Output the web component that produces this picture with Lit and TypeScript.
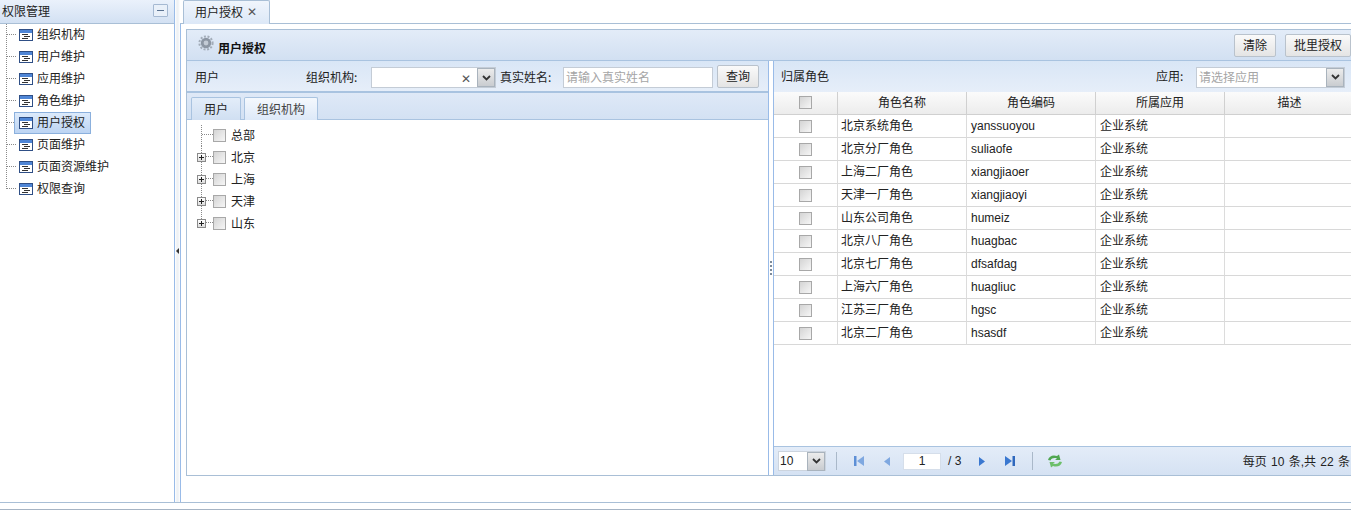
import { LitElement, html, css, svg } from "lit";
import { customElement } from "lit/decorators.js";

const nav = ["组织机构", "用户维护", "应用维护", "角色维护", "用户授权", "页面维护", "页面资源维护", "权限查询"];
const orgs = ["总部", "北京", "上海", "天津", "山东"];
const roles = [
  ["北京系统角色", "yanssuoyou"],
  ["北京分厂角色", "suliaofe"],
  ["上海二厂角色", "xiangjiaoer"],
  ["天津一厂角色", "xiangjiaoyi"],
  ["山东公司角色", "humeiz"],
  ["北京八厂角色", "huagbac"],
  ["北京七厂角色", "dfsafdag"],
  ["上海六厂角色", "huagliuc"],
  ["江苏三厂角色", "hgsc"],
  ["北京二厂角色", "hsasdf"],
];

const docIcon = html`<svg class="ico" width="16" height="16" viewBox="0 0 16 16">
  <rect x="1.5" y="2.5" width="13" height="11" fill="#fff" stroke="#2f4f86"/>
  <rect x="2" y="3" width="12" height="3" fill="#4f86d6"/>
  <path d="M4 7.5h6M6 9.5h6M4 11.5h6" stroke="#333" stroke-width="1"/>
</svg>`;

const chevron = html`<svg width="9" height="6" viewBox="0 0 9 6"><path d="M1 1l3.5 3.5L8 1" fill="none" stroke="#333" stroke-width="1.8"/></svg>`;

const conn = (last: boolean) => svg`
  <path d="M6.5 0V${last ? 11 : 22}" stroke="#8a8a8a" stroke-dasharray="1 1" fill="none"/>
  <path d="M7 10.5H16" stroke="#8a8a8a" stroke-dasharray="1 1" fill="none"/>`;

@customElement("app-root")
export class AppRoot extends LitElement {
  static styles = css`
    :host {
      display: block;
      width: 1351px;
      height: 510px;
      overflow: hidden;
      background: #fff;
      font: 12px "Noto Sans CJK SC", "Liberation Sans", sans-serif;
      color: #222;
    }
    .latin { font-family: "Liberation Sans", "Noto Sans CJK SC", sans-serif; }
    .app { height: 503px; display: flex; border-bottom: 1px solid #a9bfd6; box-sizing: border-box; }
    .foot { height: 6px; border-bottom: 1px solid #a6b4c4; }
    .side { width: 175px; flex: none; border-right: 1px solid #99bbe8; box-sizing: border-box; display: flex; flex-direction: column; }
    .side-h {
      height: 24px; flex: none; box-sizing: border-box; display: flex; align-items: center; justify-content: space-between;
      padding: 0 6px 2px 2px; color: #222;
      background: linear-gradient(#eaf1fb, #d3e1f3); border-bottom: 1px solid #a9bfd6;
    }
    .collapse {
      width: 13px; height: 11px; border: 1px solid #a5b9d2; background: #e9f0f9; border-radius: 1px;
      display: flex; align-items: center; justify-content: center;
    }
    .collapse i { width: 7px; height: 1px; background: #5a7290; display: block; }
    .nav { display: flex; flex-direction: column; }
    .nav-row { height: 22px; display: flex; align-items: center; }
    .nav-row svg.conn { flex: none; }
    .nav-item { height: 22px; box-sizing: border-box; display: flex; align-items: center; gap: 3px; margin-left: -2px; padding: 0 5px 0 3px; border: 1px solid transparent; }
    .nav-item span { padding-bottom: 3px; }
    .nav-item.sel { background: linear-gradient(#dceafb, #bcd4f3); border-color: #8bb0dd; }
    .ico { flex: none; }
    .split { width: 5px; flex: none; display: flex; align-items: center; justify-content: center; background: linear-gradient(90deg, #fff, #eef1f4 40%, #eef1f4 60%, #fff); }
    .split i { width: 0; height: 0; border: 3px solid transparent; border-right: 3px solid #333; border-left: 0; display: block; }
    .main { flex: 1; min-width: 0; display: flex; flex-direction: column; overflow: hidden; }
    .tabs { height: 24px; flex: none; box-sizing: border-box; padding-left: 3px; border-bottom: 1px solid #a9bfd6; display: flex; align-items: flex-end; }
    .tab {
      width: 87px; height: 24px; box-sizing: border-box; border: 1px solid #a9bfd6; border-bottom: 0; border-radius: 2px 2px 0 0;
      background: linear-gradient(#f0f5fc, #dce8f7); display: flex; align-items: center; gap: 4px; padding: 0 0 3px 11px; margin-bottom: -1px;
    }
    .tab .x { color: #555; font-size: 12px; line-height: 1; }
    .body { flex: 1; min-height: 0; border-left: 1px solid #99bbe8; padding: 5px 0 26px 5px; display: flex; }
    .panel { flex: none; width: 1180px; border: 1px solid #a9bfd6; box-sizing: border-box; display: flex; flex-direction: column; }
    .p-head {
      height: 31px; flex: none; box-sizing: border-box; display: flex; align-items: center; padding: 0 14px 0 11px;
      background: linear-gradient(#e3ecf8, #d2e0f2); border-bottom: 1px solid #a9c3e0;
    }
    .p-title { font-weight: 700; margin-left: 4px; padding-top: 4px; color: #111; }
    .gear { margin-top: -4px; }
    .spacer { flex: 1; }
    .btn {
      height: 23px; box-sizing: border-box; border: 1px solid #b9c2cc; border-radius: 2px; background: linear-gradient(#fafafa, #e4e4e4);
      display: flex; align-items: center; justify-content: center; color: #222; flex: none; padding: 0 0 2px; font: inherit;
    }
    .b-clear { width: 42px; margin-right: 9px; }
    .b-batch { width: 66px; }
    .b-query { width: 42px; margin: 0 0 2px 4px; }
    .panes { flex: 1; min-height: 0; display: flex; }
    .lp { width: 582px; flex: none; display: flex; flex-direction: column; border-right: 1px solid #99bbe8; box-sizing: border-box; }
    .gap { width: 4px; flex: none; display: flex; flex-direction: column; align-items: center; justify-content: center; gap: 2px; }
    .gap i { width: 2px; height: 2px; background: #7c8a99; display: block; }
    .rp { flex: 1; min-width: 0; display: flex; flex-direction: column; border-left: 1px solid #99bbe8; }
    .bar {
      flex: none; box-sizing: border-box; display: flex; align-items: center;
      background: linear-gradient(#d9e6f6, #e6eef9); color: #222;
    }
    .bar .t { padding-bottom: 3px; }
    .lp .bar { height: 32px; border-bottom: 2px solid #a9c3e0; padding: 3px 0 0 8px; }
    .rp .bar { height: 31px; padding: 1px 0 0 7px; }
    .combo { height: 21px; box-sizing: border-box; border: 1px solid #c4ccd6; background: #fff; display: flex; align-items: center; flex: none; }
    .arrow {
      width: 18px; height: 19px; flex: none; box-sizing: border-box; border: 1px solid #a9b3bd; background: linear-gradient(#ececec, #c9ccd0);
      display: flex; align-items: center; justify-content: center; margin-left: auto;
    }
    .clear { margin-left: auto; margin-right: 6px; color: #555; }
    .ph { color: #a5a5a5; padding: 0 0 2px 2px; }
    .c-org { width: 125px; }
    .c-org .arrow { margin-left: 0; }
    .c-name { width: 150px; }
    .c-app { width: 149px; margin: 0 20px 0 10px; }
    .app-label { margin-left: auto; width: 30px; }
    .subtabs { height: 27px; flex: none; box-sizing: border-box; display: flex; align-items: flex-end; padding-left: 4px; gap: 3px; background: linear-gradient(#dfe9f7, #d3e1f3); border-bottom: 1px solid #a9c3e0; }
    .st { height: 23px; box-sizing: border-box; border: 1px solid #a9c3e0; border-bottom: 0; border-radius: 2px 2px 0 0; display: flex; align-items: center; justify-content: center; margin-bottom: -1px; padding-bottom: 2px; }
    .st.off { width: 50px; background: linear-gradient(#e3edf9, #d0dff2); }
    .st.on { width: 74px; background: linear-gradient(#f4f8fd, #dde9f8); color: #444; }
    .tree { padding-top: 4px; display: flex; flex-direction: column; }
    .t-row { height: 22px; display: flex; align-items: center; position: relative; }
    .t-row > svg { flex: none; margin-left: 8px; }
    .t-row > .lbl { padding-bottom: 2px; margin-left: 5px; }
    .plus {
      width: 9px; height: 9px; box-sizing: border-box; border: 1px solid #8a8a8a; background: linear-gradient(#fff, #ddd); position: absolute; left: 10px; top: 7px;
      display: flex; align-items: center; justify-content: center;
    }
    .cb { width: 13px; height: 13px; flex: none; box-sizing: border-box; border: 1px solid #a8a8a8; background: linear-gradient(135deg, #d4d4d4, #f6f6f6); display: block; }
    .grid { display: grid; grid-template-columns: 64px 129px 129px 129px 130px; }
    .th {
      height: 23px; box-sizing: border-box; border-right: 1px solid #d0d0d0; border-bottom: 1px solid #d0d0d0; background: linear-gradient(#fbfbfb, #ececec);
      display: flex; align-items: center; justify-content: center; color: #222; padding-bottom: 3px;
    }
    .th.c { padding-bottom: 1px; }
    .td {
      height: 23px; box-sizing: border-box; border-right: 1px solid #dcdcdc; border-bottom: 1px solid #d8d8d8; display: flex; align-items: center; padding: 0 0 4px 3px; color: #222;
    }
    .td.latin { padding: 0 0 0 4px; }
    .td.sys { padding-left: 4px; }
    .td.c { justify-content: center; padding: 0; }
    .table { flex: 1; min-height: 0; overflow: hidden; }
    .pager {
      height: 29px; flex: none; box-sizing: border-box; border-top: 1px solid #a9c3e0; background: linear-gradient(#e3ecf8, #d5e2f3);
      display: flex; align-items: center; padding-left: 4px; width: 577px;
    }
    .sel10 { width: 48px; height: 20px; box-sizing: border-box; background: #fff; border: 1px solid #ccd4de; display: flex; align-items: center; padding-left: 1px; }
    .sep { width: 1px; height: 18px; background: #a9b8c9; margin: 0 16px 0 10px; flex: none; }
    .sep.s2 { margin: 0 14px 0 16px; }
    .page { width: 38px; height: 17px; box-sizing: border-box; background: #fff; border: 1px solid #d5deea; display: flex; align-items: center; justify-content: center; margin: 0 7px 0 12px; flex: none; }
    .total { width: 30px; flex: none; }
    .pi { display: block; flex: none; }
    .prev { margin-left: 18px; }
    .last { margin-left: 18px; }
    .count { margin-right: 1px; white-space: nowrap; word-spacing: 1px; padding-bottom: 1px; }
  `;

  render() {
    return html`
      <div class="app">
        <aside class="side">
          <div class="side-h"><span>权限管理</span><span class="collapse"><i></i></span></div>
          <div class="nav">
            ${nav.map((n, i) => html`<div class="nav-row">
              <svg class="conn" width="16" height="22" viewBox="0 0 16 22">${conn(i === nav.length - 1)}</svg>
              <div class="nav-item ${n === "用户授权" ? "sel" : ""}">${docIcon}<span>${n}</span></div>
            </div>`)}
          </div>
        </aside>
        <div class="split"><i></i></div>
        <div class="main">
          <div class="tabs"><div class="tab"><span>用户授权</span><span class="x">✕</span></div></div>
          <div class="body">
            <div class="panel">
              <div class="p-head">
                <svg class="gear" width="16" height="16" viewBox="0 0 16 16">
                  <circle cx="8" cy="8" r="6.6" fill="none" stroke="#a3adb9" stroke-width="2" stroke-dasharray="2 1.6"/>
                  <circle cx="8" cy="8" r="5.2" fill="#8c96a3"/>
                  <circle cx="8" cy="8" r="2.4" fill="#c3cbd5"/>
                </svg>
                <span class="p-title">用户授权</span>
                <span class="spacer"></span>
                <button class="btn b-clear">清除</button>
                <button class="btn b-batch">批里授权</button>
              </div>
              <div class="panes">
                <div class="lp">
                  <div class="bar">
                    <span class="t" style="width:111px">用户</span>
                    <span class="t" style="width:65px">组织机构:</span>
                    <div class="combo c-org">
                      <span class="clear">✕</span>
                      <span class="arrow">${chevron}</span>
                    </div>
                    <span class="t" style="margin-left:4px;width:63px">真实姓名:</span>
                    <div class="combo c-name"><span class="ph">请输入真实姓名</span></div>
                    <button class="btn b-query">查询</button>
                  </div>
                  <div class="subtabs"><div class="st off">用户</div><div class="st on">组织机构</div></div>
                  <div class="tree">
                    ${orgs.map((o, i) => html`<div class="t-row">
                      <svg width="18" height="22" viewBox="0 0 18 22">
                        ${svg`<path d="M6.5 ${i === 0 ? 1 : 0}V${i === orgs.length - 1 ? 11 : 22}" stroke="#8a8a8a" stroke-dasharray="1 1"/>
                        <path d="M7 10.5H18" stroke="#8a8a8a" stroke-dasharray="1 1"/>`}
                      </svg>
                      ${i > 0 ? html`<span class="plus"><svg width="5" height="5" viewBox="0 0 5 5"><path d="M0 2.5H5M2.5 0V5" stroke="#222"/></svg></span>` : ""}
                      <span class="cb"></span><span class="lbl">${o}</span>
                    </div>`)}
                  </div>
                </div>
                <div class="gap"><i></i><i></i><i></i><i></i></div>
                <div class="rp">
                  <div class="bar">
                    <span class="t">归属角色</span>
                    <span class="t app-label">应用:</span>
                    <div class="combo c-app">
                      <span class="ph">请选择应用</span><span class="arrow">${chevron}</span>
                    </div>
                  </div>
                  <div class="table">
                    <div class="grid">
                      <div class="th c"><span class="cb"></span></div>
                      <div class="th">角色名称</div><div class="th">角色编码</div><div class="th">所属应用</div><div class="th">描述</div>
                      ${roles.map((r) => html`
                        <div class="td c"><span class="cb"></span></div>
                        <div class="td">${r[0]}</div>
                        <div class="td latin">${r[1]}</div>
                        <div class="td sys">企业系统</div>
                        <div class="td"></div>`)}
                    </div>
                  </div>
                  <div class="pager">
                    <div class="sel10 latin">10<span class="arrow">${chevron}</span></div>
                    <span class="sep"></span>
                    <svg class="pi" width="12" height="12" viewBox="0 0 12 12"><path d="M1 1h2.5v10H1z" fill="#5d8fd6"/><path d="M11 1v10L4 6z" fill="#7fa8e0"/></svg>
                    <svg class="pi prev" width="8" height="11" viewBox="0 0 8 11"><path d="M7 1v9L1 5.5z" fill="#7fa8e0"/></svg>
                    <span class="page latin">1</span>
                    <span class="latin total">/ 3</span>
                    <svg class="pi" width="8" height="11" viewBox="0 0 8 11"><path d="M1 1v9l6-4.500z" fill="#3a78d0"/></svg>
                    <svg class="pi last" width="12" height="12" viewBox="0 0 12 12"><path d="M1 1v10l7-5z" fill="#3a78d0"/><path d="M8.5 1H11v10H8.5z" fill="#2f68bd"/></svg>
                    <span class="sep s2"></span>
                    <svg class="pi" width="16" height="16" viewBox="0 0 16 16"><path d="M1 7C2 3 6 1.500 10 3l2-1.500 1.500 5.500H8l2-1.500C7.500 4.500 4.500 5 3.500 7.500z" fill="#4fa650"/><path d="M15 9c-1 4-5 5.500-9 4l-2 1.500L2.500 9H8l-2 1.500c2.500 1 5.500.5 6.500-2z" fill="#6cbf6a"/></svg>
                    <span class="spacer"></span>
                    <span class="latin count">每页 10 条,共 22 条</span>
                  </div>
                </div>
              </div>
            </div>
          </div>
        </div>
      </div>
      <div class="foot"></div>
    `;
  }
}
